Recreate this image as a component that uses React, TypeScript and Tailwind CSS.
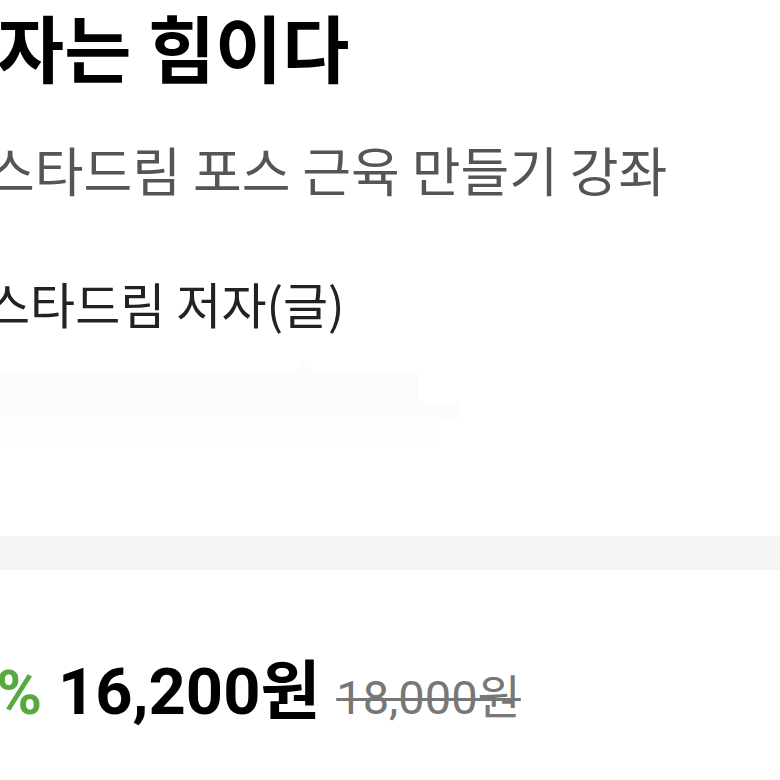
export default function App() {
  return (
    <div className="w-[780px] h-[780px] overflow-hidden bg-white font-['Noto_Sans_CJK_KR','Roboto',sans-serif]">
      <div className="flex flex-col">
        <h1 className="-ml-[3px] pt-[4px] h-[100px] text-[73px] font-bold leading-[82px] text-black whitespace-nowrap">
          자는 힘이다
        </h1>
        <p className="-ml-[14px] mt-[34px] h-[70px] text-[53px] leading-[70px] text-[#555555] whitespace-nowrap">
          스타드림 포스 근육 만들기 강좌
        </p>
        <p className="-ml-[15px] mt-[67px] h-[64px] text-[49px] leading-[64px] text-[#222222] whitespace-nowrap">
          스타드림 저자(글)
        </p>
        <div className="mt-[27px] flex flex-col">
          <div className="flex">
            <div className="w-[300px] h-[8px]" />
            <div className="w-[10px] h-[8px] bg-[#fcfcfc]" />
          </div>
          <div className="w-[418px] h-[32px] bg-[#fcfcfc]" />
          <div className="w-[460px] h-[16px] bg-[#fcfcfc]" />
          <div className="w-[440px] h-[24px] bg-[#fdfdfd]" />
        </div>
        <div className="mt-[94px] h-[34px] bg-[#f5f5f5]" />
        <div className="-ml-[75px] mt-[90px] flex items-baseline gap-[16px] whitespace-nowrap font-['Roboto','Noto_Sans_CJK_KR',sans-serif]">
          <span className="flex items-baseline gap-[16px]">
            <span className="text-[62px] font-bold text-[#58a942] leading-none">10%</span>
            <span className="text-[65px] font-bold text-black leading-none">16,200원</span>
          </span>
          <span className="text-[47px] text-[#777777] leading-none line-through decoration-[3px]">18,000원</span>
        </div>
      </div>
    </div>
  );
}
